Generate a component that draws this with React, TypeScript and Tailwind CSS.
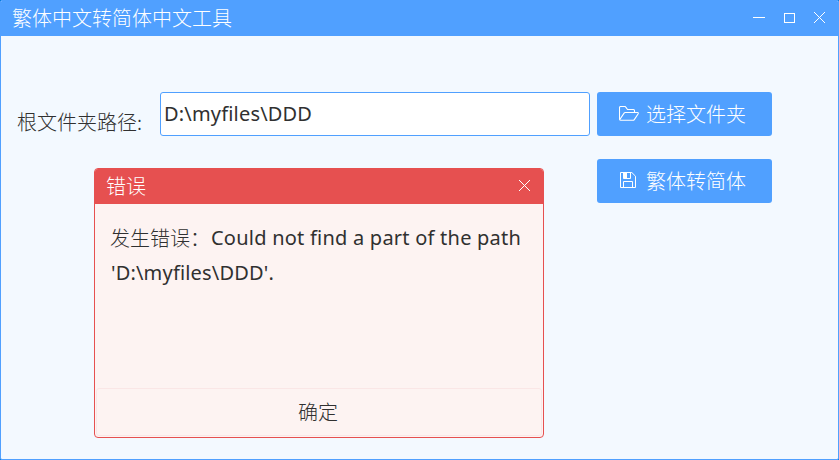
import React from 'react';

const cjk = "font-['Noto_Sans_CJK_SC',sans-serif] font-light";
const latin = "font-['Noto_Sans','Noto_Sans_CJK_SC',sans-serif]";

function CloseIcon() {
  return (
    <svg width="11" height="11" viewBox="0 0 11 11" shapeRendering="crispEdges" stroke="white" strokeWidth="1">
      <path d="M0 0L11 11M11 0L0 11" />
    </svg>
  );
}

function FolderIcon() {
  return (
    <svg width="20" height="16" viewBox="0 0 20 16" fill="none" stroke="white" strokeWidth="1.1" strokeLinejoin="round" strokeLinecap="round">
      <path d="M15.5 6.5V4.5Q15.5 3.5 14.5 3.5H8.5L6.8 1.1Q6.4.5 5.8.5H1.6Q.5.5.5 1.6V13Q.5 14.3 1.8 14.3H14Q14.8 14.3 15.3 13.6L19.2 7.7Q19.5 6.5 18.6 6.5H6.2Q5.5 6.5 5.1 7.1L.8 13.5" />
    </svg>
  );
}

function SaveIcon() {
  return (
    <svg width="16" height="16" viewBox="0 0 16 16" fill="none" stroke="white" strokeWidth="1">
      <path d="M.5.5H11.8L15.5 4.2V15.5H.5ZM3.5.5V6.5H10.5V.5M3.5 15.5V9.5H12.5V15.5" />
      <path d="M3.5 .5H7V6.5H3.5Z" fill="white" stroke="none" />
    </svg>
  );
}

function ActionButton({ icon, label }: { icon: React.ReactNode; label: string }) {
  return (
    <button className="flex h-11 w-[175px] items-center rounded-[3px] bg-[#50a0ff] pl-[22px] text-white">
      <span className="flex w-[27px] shrink-0 items-center justify-start">{icon}</span>
      <span className={`${cjk} text-[20px] leading-[44px] whitespace-nowrap`}>{label}</span>
    </button>
  );
}

function ErrorDialog() {
  return (
    <div className="absolute left-[94px] top-[168px] flex h-[270px] w-[450px] flex-col overflow-hidden rounded-[4px] border border-[#e65050] bg-[#fdf3f2]">
      <div className="flex h-[35px] shrink-0 items-start justify-between bg-[#e65050] pl-[11px] pr-[13px] text-white">
        <span className={`${cjk} text-[20px] leading-[34px]`}>错误</span>
        <span className="mt-[11px] flex">
          <CloseIcon />
        </span>
      </div>
      <div className="flex-1 pl-[15px] pt-4 text-[20px] leading-[35px] text-[#303030]">
        <div className="flex whitespace-nowrap">
          <span className={cjk}>发生错误：</span>
          <span className={`${latin} pl-px tracking-[0.23px]`}>Could not find a part of the path</span>
        </div>
        <div className={`${latin} pl-px tracking-[0.18px]`}>'D:\myfiles\DDD'.</div>
      </div>
      <button className={`${cjk} mx-px mb-px h-12 shrink-0 rounded-[3px] border border-[#fae6e6] pr-0.5 text-[20px] leading-[46px] text-[#303030]`}>
        确定
      </button>
    </div>
  );
}

export default function App() {
  return (
    <div className="h-[460px] w-[839px] bg-[#0078d7]">
      <div className="relative flex h-full w-full flex-col overflow-hidden rounded-[2px] border border-[#50a0ff] bg-[#f3f9ff]">
        <div className="flex h-[35px] shrink-0 items-start bg-[#50a0ff] pl-[11px] pr-[13px] text-white">
          <span className={`${cjk} flex-1 text-[20px] leading-[34px]`}>繁体中文转简体中文工具</span>
          <div className="mt-[11px] flex items-start">
            <span className="mr-[19px] mt-[5px] h-px w-3 bg-white" />
            <span className="mr-[19px] mt-px h-[10px] w-[11px] border border-white" />
            <CloseIcon />
          </div>
        </div>
        <div className="flex pl-4 pt-14">
          <label className={`${cjk} mt-[15px] w-[143px] text-[20px] leading-[30px] text-[#303030]`}>根文件夹路径:</label>
          <div className={`${latin} h-11 w-[430px] rounded-[3px] border border-[#50a0ff] bg-white pl-[3px] text-[20px] leading-[42px] tracking-[0.18px] text-[#303030]`}>
            D:\myfiles\DDD
          </div>
          <div className="ml-[7px] flex flex-col gap-[23px]">
            <ActionButton icon={<FolderIcon />} label="选择文件夹" />
            <ActionButton icon={<span className="mb-0.5 ml-px"><SaveIcon /></span>} label="繁体转简体" />
          </div>
        </div>
        <div className="absolute left-[-1px] top-[-1px]">
          <ErrorDialog />
        </div>
      </div>
    </div>
  );
}
